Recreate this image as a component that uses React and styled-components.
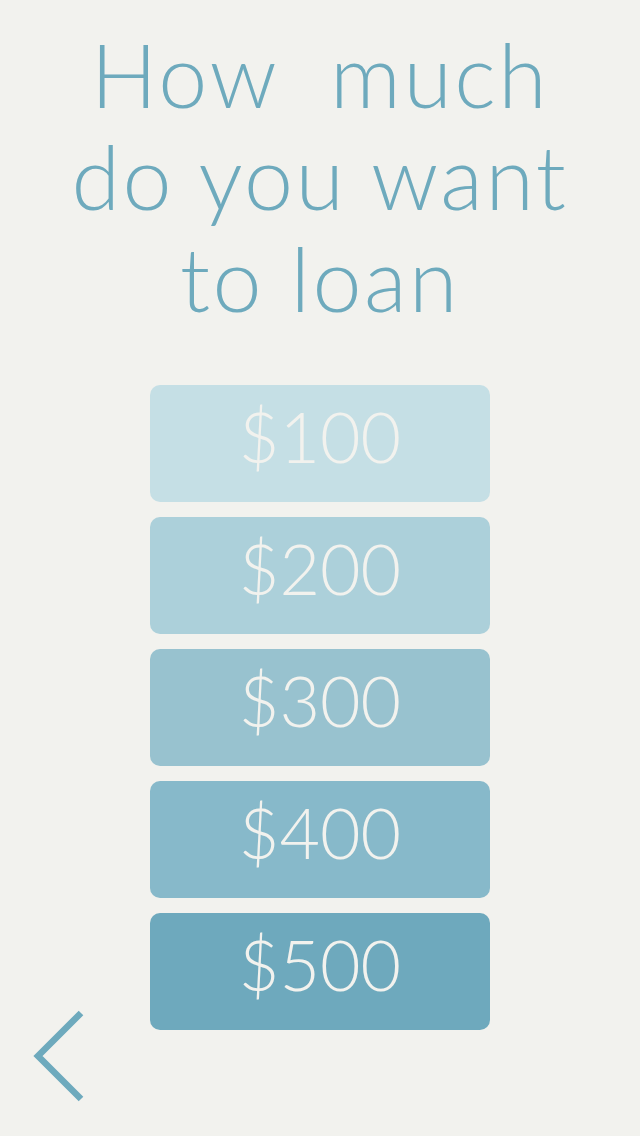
import React from "react";
import styled, { createGlobalStyle } from "styled-components";

const GlobalStyle = createGlobalStyle`
	html, body {
		margin: 0;
		padding: 0;
		background: #f2f2ee;
	}
	body {
		font-family: "Lato", "Open Sans", sans-serif;
	}
`;

const amounts = [
	{ label: "$100", color: "#c5dfe5" },
	{ label: "$200", color: "#acd0da" },
	{ label: "$300", color: "#98c2cf" },
	{ label: "$400", color: "#87b9ca" },
	{ label: "$500", color: "#6ea9bd" },
];

function App() {
	return (
		<>
			<GlobalStyle />
			<Screen>
				<Title>
					How&nbsp; much
					<br />
					do you want
					<br />
					to loan
				</Title>
				<AmountList>
					{amounts.map((a) => (
						<AmountButton key={a.label} $bg={a.color}>
							{a.label}
						</AmountButton>
					))}
				</AmountList>
				<BackButton aria-label="Back">
					<svg width="56" height="92" viewBox="0 0 56 92">
						<polyline
							points="49,3 6,46 49,89"
							fill="none"
							stroke="#6eaabd"
							strokeWidth="6.5"
						/>
					</svg>
				</BackButton>
			</Screen>
		</>
	);
}

export default App;

const Screen = styled.div`
	position: relative;
	width: 640px;
	height: 1136px;
	overflow: hidden;
	display: flex;
	flex-direction: column;
	align-items: center;
	background: #f2f2ee;
`;

const Title = styled.h1`
	margin: 23px 0 0;
	font-size: 88px;
	font-weight: 300;
	line-height: 102px;
	color: #6eaabd;
	text-align: center;
	letter-spacing: 2.5px;
	white-space: nowrap;
`;

const AmountList = styled.div`
	margin-top: 56px;
	display: flex;
	flex-direction: column;
	gap: 15px;
`;

const AmountButton = styled.button`
	width: 340px;
	height: 117px;
	border: none;
	border-radius: 10px;
	background: ${(p) => p.$bg};
	color: #f2f2ee;
	font-family: "Lato", "Open Sans", sans-serif;
	font-size: 70px;
	font-weight: 300;
	display: flex;
	align-items: center;
	justify-content: center;
	padding: 0 0 16px;
	cursor: pointer;
`;

const BackButton = styled.button`
	position: absolute;
	left: 32px;
	bottom: 34px;
	border: none;
	background: none;
	padding: 0;
	display: flex;
	cursor: pointer;
`;
